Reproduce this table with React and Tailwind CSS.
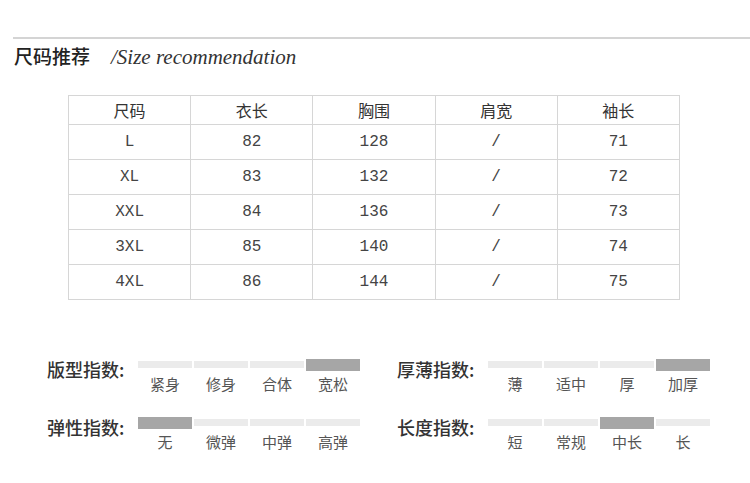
import React from 'react'

// size chart rows
const HEAD = ['尺码', '衣长', '胸围', '肩宽', '袖长']
const ROWS = [
  ['L', '82', '128', '/', '71'],
  ['XL', '83', '132', '/', '72'],
  ['XXL', '84', '136', '/', '73'],
  ['3XL', '85', '140', '/', '74'],
  ['4XL', '86', '144', '/', '75'],
]

const INDEXES = [
  { title: '版型指数:', opts: ['紧身', '修身', '合体', '宽松'], active: 3 },
  { title: '厚薄指数:', opts: ['薄', '适中', '厚', '加厚'], active: 3 },
  { title: '弹性指数:', opts: ['无', '微弹', '中弹', '高弹'], active: 0 },
  { title: '长度指数:', opts: ['短', '常规', '中长', '长'], active: 2 },
]

const cjk = "font-['Noto_Sans_CJK_SC','Noto_Sans',sans-serif]"

function IndexRow({ title, opts, active }) {
  return (
    <div className="flex items-start">
      <div className={`w-[91px] text-[18px] leading-[18px] mt-[1px] text-[#333] font-medium ${cjk}`}>{title}</div>
      <div className="flex gap-[2px]">
        {opts.map((o, i) => (
          <div key={o} className="w-[54px] flex flex-col items-center">
            <div className="h-[12px] w-full flex items-start">
              {i === active ? (
                <div className="h-[12px] w-full bg-[#a6a6a6]" />
              ) : (
                <div className="mt-[2px] h-[7px] w-full bg-[#ebebeb]" />
              )}
            </div>
            <div className={`mt-[5px] text-[15px] leading-[15px] text-[#555] ${cjk}`}>{o}</div>
          </div>
        ))}
      </div>
    </div>
  )
}

export default function App() {
  return (
    <div className="w-[750px] h-[483px] bg-white overflow-hidden">
      <div className="ml-[13px] mt-[37px] h-[2px] bg-[#d4d4d4]" />

      <div className="flex items-baseline pl-[14px] mt-[7px]">
        <span className={`text-[19px] leading-[20px] font-medium text-[#222] ${cjk}`}>尺码推荐</span>
        <span className="ml-[21px] text-[21px] leading-[20px] italic text-[#333] font-['Liberation_Serif',serif]">/Size recommendation</span>
      </div>

      <table className="ml-[68px] mt-[28px] w-[612px] border-collapse table-fixed">
        <thead>
          <tr className="h-[29px]">
            {HEAD.map(h => (
              <th key={h} className={`border border-[#d6d6d6] font-normal text-[16px] leading-[16px] text-[#333] ${cjk}`}>{h}</th>
            ))}
          </tr>
        </thead>
        <tbody>
          {ROWS.map(r => (
            <tr key={r[0]} className="h-[35px]">
              {r.map((c, i) => (
                <td key={i} className="border border-[#d6d6d6] text-center text-[16px] leading-[16px] text-[#444] font-['Liberation_Mono',monospace]">{c}</td>
              ))}
            </tr>
          ))}
        </tbody>
      </table>

      <div className="ml-[47px] mt-[59px] grid grid-cols-[350px_320px] gap-y-[26px]">
        {INDEXES.map(ix => (
          <IndexRow key={ix.title} {...ix} />
        ))}
      </div>
    </div>
  )
}
